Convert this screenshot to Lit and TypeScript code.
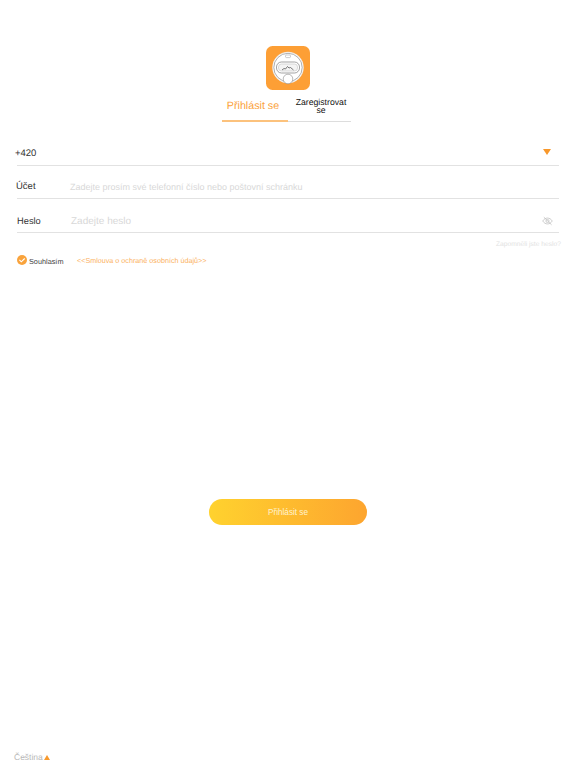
import { LitElement, css, html } from "lit"
import { customElement } from "lit/decorators.js"

@customElement("app-root")
export class AppRoot extends LitElement {
  static styles = css`
    :host {
      display: flex;
      flex-direction: column;
      width: 576px;
      height: 768px;
      overflow: hidden;
      background: #fff;
      color: #333;
      font-family: "Liberation Sans", Arial, sans-serif;
      text-rendering: geometricPrecision;
    }
    .logo {
      display: block;
      width: 44px;
      height: 44px;
      margin: 46px auto 0;
    }
    .tabs {
      display: flex;
      width: 129px;
      height: 25px;
      margin: 7px 0 0 222px;
    }
    .tab {
      display: flex;
      align-items: center;
      justify-content: center;
      text-align: center;
      box-sizing: border-box;
      padding-bottom: 6px;
    }
    .tab.on {
      width: 66px;
      padding-right: 4px;
      color: #fba23a;
      font-size: 10.7px;
      border-bottom: 2px solid #fcc27d;
    }
    .tab.off {
      width: 63px;
      padding-left: 3px;
      color: #111;
      font-size: 8.7px;
      line-height: 8px;
      border-bottom: 1px solid #ddd;
    }
    .form {
      display: flex;
      flex-direction: column;
      margin: 0 17px;
      width: 542px;
    }
    .row {
      display: flex;
      align-items: center;
      box-sizing: border-box;
      border-bottom: 1px solid #e2e2e2;
      font-size: 9.5px;
    }
    .phone {
      height: 44px;
      padding: 17px 8px 0 0;
    }
    .phone span {
      margin-left: -2px;
      padding-top: 2px;
    }
    .arrow {
      width: 0;
      height: 0;
      margin-left: auto;
      border-left: 4.5px solid transparent;
      border-right: 4.5px solid transparent;
      border-top: 6px solid #f8982b;
    }
    .account {
      height: 33px;
      padding-top: 9px;
    }
    .password {
      height: 34px;
      padding: 10px 6px 0 0;
    }
    .label {
      width: 54px;
      flex: none;
      margin-left: -1px;
    }
    .password .label {
      margin-left: 0;
      width: 54px;
      font-size: 9.3px;
    }
    .hint {
      color: #d8d8d8;
      font-size: 9px;
    }
    .password .hint {
      padding-top: 2px;
      font-size: 10px;
    }
    .eye {
      width: 11px;
      height: 10px;
      margin-left: auto;
    }
    .forgot {
      align-self: flex-end;
      margin: 7px -2px 0 0;
      color: #e2e2e2;
      font-size: 6.7px;
      line-height: 9px;
    }
    .agree {
      display: flex;
      align-items: center;
      margin-top: 5px;
      height: 12px;
    }
    .check {
      width: 10px;
      height: 10px;
      flex: none;
    }
    .yes {
      margin-left: 2px;
      width: 48px;
      color: #444;
      font-size: 7.3px;
      padding-top: 2px;
    }
    .terms {
      color: #fbb161;
      font-size: 7.2px;
    }
    .submit {
      display: block;
      width: 158px;
      height: 26px;
      margin: 233px 0 0 209px;
      padding: 0;
      border: 0;
      border-radius: 13px;
      background: linear-gradient(90deg, #ffd22e, #fda52f);
      color: #fff3cf;
      font: 8.2px "Liberation Sans", Arial, sans-serif;
    }
    .lang {
      display: flex;
      align-items: center;
      margin: auto 0 6px 14px;
      color: #b8b8b8;
      font-size: 8.5px;
      line-height: 10px;
    }
    .up {
      width: 0;
      height: 0;
      margin-left: 1px;
      border-left: 3.5px solid transparent;
      border-right: 3.5px solid transparent;
      border-bottom: 5px solid #f89a2e;
    }
  `

  render () {
    return html`
      <svg class="logo" viewBox="0 0 44 44">
        <rect width="44" height="44" rx="6.5" fill="#fd9f35"></rect>
        <circle cx="22" cy="21.500" r="15.500" fill="#fff" stroke="#e4e4e4" stroke-width="0.5"></circle>
        <circle cx="22" cy="21.500" r="14.200" fill="none" stroke="#777" stroke-width="0.6"></circle>
        <rect x="19.500" y="9" width="5" height="2.600" rx="1" fill="none" stroke="#999" stroke-width="0.5"></rect>
        <rect x="10.500" y="16" width="23" height="11" rx="5" fill="#fff" stroke="#666" stroke-width="0.6"></rect>
        <rect x="12.500" y="18" width="19" height="7" rx="3" fill="#f4f4f4" stroke="#aaa" stroke-width="0.4"></rect>
        <path d="M16 24l2-1.500 1.500 .5 2-2.500 1.500 1.500 1.500-.5 3 2.500" fill="none" stroke="#444" stroke-width="0.7"></path>
        <circle cx="22" cy="33" r="4.800" fill="#fff" stroke="#888" stroke-width="0.6"></circle>
      </svg>
      <div class="tabs">
        <div class="tab on">Přihlásit se</div>
        <div class="tab off">Zaregistrovat se</div>
      </div>
      <div class="form">
        <div class="row phone"><span>+420</span><i class="arrow"></i></div>
        <div class="row account">
          <div class="label">Účet</div>
          <div class="hint">Zadejte prosím své telefonní číslo nebo poštovní schránku</div>
        </div>
        <div class="row password">
          <div class="label">Heslo</div>
          <div class="hint">Zadejte heslo</div>
          <svg class="eye" viewBox="0 0 12 10" fill="none" stroke="#c4c4c4" stroke-width="0.9">
            <path d="M.8 5C2.200 2.800 4 1.800 6 1.800S9.800 2.800 11.200 5C9.800 7.200 8 8.200 6 8.200S2.200 7.200 .8 5Z"></path>
            <circle cx="6" cy="5" r="1.700"></circle>
            <path d="M2 .8l8.500 8.400"></path>
          </svg>
        </div>
        <div class="forgot">Zapomněli jste heslo?</div>
        <div class="agree">
          <svg class="check" viewBox="0 0 10 10">
            <circle cx="5" cy="5" r="5" fill="#f9a33c"></circle>
            <path d="M2.400 4.900l1.900 1.900 3.400-3.300" fill="none" stroke="#fff" stroke-width="1.100"></path>
          </svg>
          <span class="yes">Souhlasím</span>
          <span class="terms">&lt;&lt;Smlouva o ochraně osobních údajů&gt;&gt;</span>
        </div>
      </div>
      <button class="submit">Přihlásit se</button>
      <div class="lang">Čeština<i class="up"></i></div>
    `
  }
}
